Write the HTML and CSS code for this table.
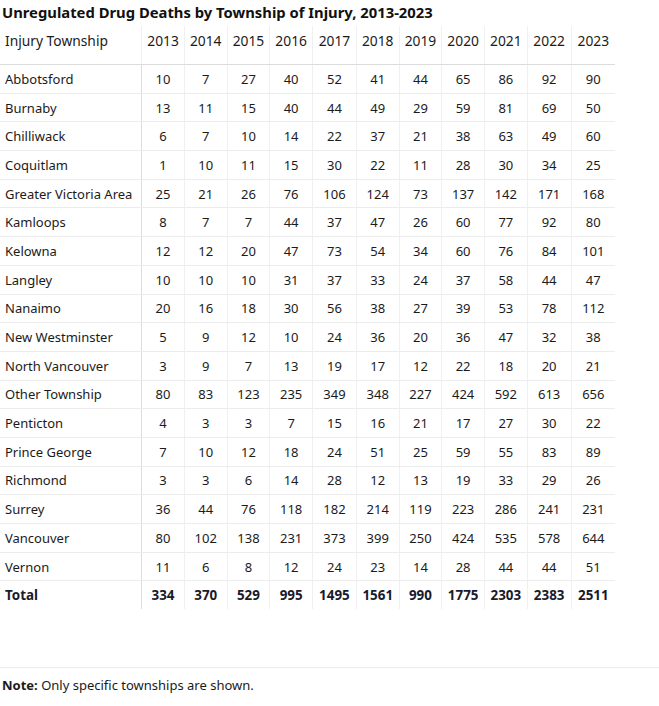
FILE: index.html
```html
<!DOCTYPE html>
<html>
<head>
<meta charset="utf-8">
<link rel="stylesheet" href="styles.css">
</head>
<body>
<div class="page">
  <h1 class="title">Unregulated Drug Deaths by Township of Injury, 2013-2023</h1>
  <table class="data">
    <colgroup>
      <col class="c-name">
      <col class="c-y"><col class="c-y"><col class="c-y"><col class="c-y"><col class="c-y2">
      <col class="c-y"><col class="c-y"><col class="c-y"><col class="c-y"><col class="c-y2"><col class="c-y2">
    </colgroup>
    <thead>
      <tr><th class="name">Injury Township</th><th>2013</th><th>2014</th><th>2015</th><th>2016</th><th>2017</th><th>2018</th><th>2019</th><th>2020</th><th>2021</th><th>2022</th><th>2023</th></tr>
    </thead>
    <tbody>
      <tr><td class="name">Abbotsford</td><td>10</td><td>7</td><td>27</td><td>40</td><td>52</td><td>41</td><td>44</td><td>65</td><td>86</td><td>92</td><td>90</td></tr>
      <tr><td class="name">Burnaby</td><td>13</td><td>11</td><td>15</td><td>40</td><td>44</td><td>49</td><td>29</td><td>59</td><td>81</td><td>69</td><td>50</td></tr>
      <tr><td class="name">Chilliwack</td><td>6</td><td>7</td><td>10</td><td>14</td><td>22</td><td>37</td><td>21</td><td>38</td><td>63</td><td>49</td><td>60</td></tr>
      <tr><td class="name">Coquitlam</td><td>1</td><td>10</td><td>11</td><td>15</td><td>30</td><td>22</td><td>11</td><td>28</td><td>30</td><td>34</td><td>25</td></tr>
      <tr><td class="name">Greater Victoria Area</td><td>25</td><td>21</td><td>26</td><td>76</td><td>106</td><td>124</td><td>73</td><td>137</td><td>142</td><td>171</td><td>168</td></tr>
      <tr><td class="name">Kamloops</td><td>8</td><td>7</td><td>7</td><td>44</td><td>37</td><td>47</td><td>26</td><td>60</td><td>77</td><td>92</td><td>80</td></tr>
      <tr><td class="name">Kelowna</td><td>12</td><td>12</td><td>20</td><td>47</td><td>73</td><td>54</td><td>34</td><td>60</td><td>76</td><td>84</td><td>101</td></tr>
      <tr><td class="name">Langley</td><td>10</td><td>10</td><td>10</td><td>31</td><td>37</td><td>33</td><td>24</td><td>37</td><td>58</td><td>44</td><td>47</td></tr>
      <tr><td class="name">Nanaimo</td><td>20</td><td>16</td><td>18</td><td>30</td><td>56</td><td>38</td><td>27</td><td>39</td><td>53</td><td>78</td><td>112</td></tr>
      <tr><td class="name">New Westminster</td><td>5</td><td>9</td><td>12</td><td>10</td><td>24</td><td>36</td><td>20</td><td>36</td><td>47</td><td>32</td><td>38</td></tr>
      <tr><td class="name">North Vancouver</td><td>3</td><td>9</td><td>7</td><td>13</td><td>19</td><td>17</td><td>12</td><td>22</td><td>18</td><td>20</td><td>21</td></tr>
      <tr><td class="name">Other Township</td><td>80</td><td>83</td><td>123</td><td>235</td><td>349</td><td>348</td><td>227</td><td>424</td><td>592</td><td>613</td><td>656</td></tr>
      <tr><td class="name">Penticton</td><td>4</td><td>3</td><td>3</td><td>7</td><td>15</td><td>16</td><td>21</td><td>17</td><td>27</td><td>30</td><td>22</td></tr>
      <tr><td class="name">Prince George</td><td>7</td><td>10</td><td>12</td><td>18</td><td>24</td><td>51</td><td>25</td><td>59</td><td>55</td><td>83</td><td>89</td></tr>
      <tr><td class="name">Richmond</td><td>3</td><td>3</td><td>6</td><td>14</td><td>28</td><td>12</td><td>13</td><td>19</td><td>33</td><td>29</td><td>26</td></tr>
      <tr><td class="name">Surrey</td><td>36</td><td>44</td><td>76</td><td>118</td><td>182</td><td>214</td><td>119</td><td>223</td><td>286</td><td>241</td><td>231</td></tr>
      <tr><td class="name">Vancouver</td><td>80</td><td>102</td><td>138</td><td>231</td><td>373</td><td>399</td><td>250</td><td>424</td><td>535</td><td>578</td><td>644</td></tr>
      <tr><td class="name">Vernon</td><td>11</td><td>6</td><td>8</td><td>12</td><td>24</td><td>23</td><td>14</td><td>28</td><td>44</td><td>44</td><td>51</td></tr>
      <tr class="total"><td class="name">Total</td><td>334</td><td>370</td><td>529</td><td>995</td><td>1495</td><td>1561</td><td>990</td><td>1775</td><td>2303</td><td>2383</td><td>2511</td></tr>
    </tbody>
  </table>
  <div class="note"><strong>Note:</strong> Only specific townships are shown.</div>
</div>
</body>
</html>
```

FILE: styles.css
```css
html, body {
  margin: 0;
  padding: 0;
  background: #ffffff;
}

body {
  font-family: "Noto Sans", "Open Sans", sans-serif;
  color: #1b1b1b;
}

.page {
  width: 659px;
}

.title {
  margin: 0;
  padding: 2px 0 0 2px;
  height: 24px;
  font-size: 14.8px;
  font-weight: 700;
  line-height: 20px;
  color: #111111;
}

.data {
  border-collapse: collapse;
  width: 615px;
  table-layout: fixed;
  font-size: 13px;
}

.c-name { width: 141px; }
.c-y { width: 42.5px; }
.c-y2 { width: 43.7px; }

.data th {
  height: 28px;
  padding: 0 0 10px 0;
  font-weight: 400;
  font-size: 13.8px;
  text-align: center;
  vertical-align: middle;
  border-left: 1px solid #f0f0f0;
  border-bottom: 1px solid #dcdcdc;
  color: #1b1b1b;
}

.data td {
  height: 27.7px;
  padding: 0;
  text-align: center;
  vertical-align: middle;
  border-left: 1px solid #f0f0f0;
  border-bottom: 1px solid #ececec;
}

.data .name {
  text-align: left;
  padding-left: 5px;
  border-left: none;
  border-right: 1px solid #dcdcdc;
}

.data th.name {
  border-right: none;
}

.data .total td {
  border-bottom: none;
  font-weight: 700;
  color: #1a1a2c;
  font-size: 13.4px;
}

.note {
  margin-top: 58px;
  border-top: 1px solid #ececec;
  padding: 8px 0 0 2px;
  font-size: 13px;
  color: #1b1b1b;
}

.note strong {
  font-weight: 700;
}
```
